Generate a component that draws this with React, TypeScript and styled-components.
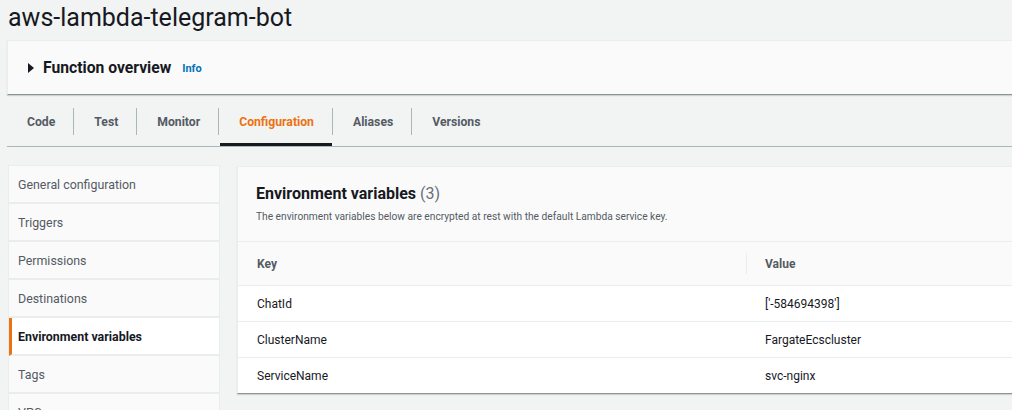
import React from 'react';
import styled, { createGlobalStyle } from 'styled-components';

const GlobalStyle = createGlobalStyle`
  html, body {
    margin: 0;
    padding: 0;
    background: #f2f3f3;
    overflow: hidden;
  }
  body {
    font-family: Roboto, "Liberation Sans", Arial, sans-serif;
    color: #16191f;
  }
`;

const Page = styled.div`
  width: 1040px;
  padding-left: 7px;
`;

const Title = styled.h1`
  margin: 0;
  height: 40px;
  padding-left: 1px;
  font-size: 25px;
  font-weight: 400;
  line-height: 35px;
  color: #16191f;
`;

const OverviewPanel = styled.div`
  display: flex;
  align-items: center;
  height: 53px;
  padding-left: 20px;
  background: #fafafa;
  border-top: 1px solid #eaeded;
  border-left: 1px solid #eaeded;
  border-bottom: 1px solid #879596;
  box-shadow: 0 1px 1px 0 rgba(0, 28, 36, 0.15);
`;

const Caret = styled.span`
  width: 0;
  height: 0;
  border-top: 5px solid transparent;
  border-bottom: 5px solid transparent;
  border-left: 6px solid #16191f;
  margin-right: 9px;
`;

const OverviewTitle = styled.span`
  font-size: 15.7px;
  font-weight: 700;
`;

const InfoLink = styled.a`
  margin-left: 11px;
  font-size: 11px;
  font-weight: 700;
  color: #0073bb;
  text-decoration: none;
  position: relative;
  top: 1px;
`;

const TabBar = styled.div`
  display: flex;
  margin-top: 13px;
  height: 38px;
  border-bottom: 1px solid #aab7b8;
`;

const Tab = styled.div<{ $active?: boolean; $first?: boolean }>`
  position: relative;
  display: flex;
  align-items: flex-start;
  padding: 6px 18px 0 20px;
  font-size: 12.2px;
  font-weight: 700;
  line-height: 16px;
  color: ${p => (p.$active ? '#ec7211' : '#545b64')};
  border-left: ${p => (p.$first ? 'none' : '1px solid #aab7b8')};
  height: 21px;

  &::after {
    content: '';
    display: ${p => (p.$active ? 'block' : 'none')};
    position: absolute;
    left: 1px;
    right: 0;
    bottom: -11px;
    height: 3px;
    background: #16191f;
  }
`;

const Body = styled.div`
  display: flex;
  align-items: flex-start;
  margin-top: 18px;
  padding-left: 1px;
`;

const Nav = styled.nav`
  display: flex;
  flex-direction: column;
  width: 210px;
  flex-shrink: 0;
  border-right: 1px solid #eaeded;
  border-left: 1px solid #eaeded;
  border-top: 1px solid #eaeded;
`;

const NavItem = styled.div<{ $active?: boolean }>`
  display: flex;
  align-items: center;
  height: 36px;
  padding-left: ${p => (p.$active ? '6px' : '9px')};
  border-bottom: 2px solid #eaeded;
  border-left: ${p => (p.$active ? '3px solid #ec7211' : 'none')};
  background: ${p => (p.$active ? '#ffffff' : '#fafafa')};
  font-size: 12.4px;
  font-weight: ${p => (p.$active ? 700 : 400)};
  color: ${p => (p.$active ? '#16191f' : '#545b64')};
`;

const Panel = styled.section`
  flex: 1;
  margin-left: 17px;
  margin-top: 1px;
  border-left: 1px solid #eaeded;
  border-top: 1px solid #eaeded;
  border-bottom: 1px solid #879596;
  box-shadow: 0 1px 1px 0 rgba(0, 28, 36, 0.15);
  background: #ffffff;
`;

const PanelHeader = styled.header`
  height: 75px;
  padding: 17px 0 0 18px;
  box-sizing: border-box;
  background: #fafafa;
  border-bottom: 1px solid #eaeded;
`;

const PanelTitle = styled.h2`
  margin: 0;
  font-size: 16px;
  font-weight: 700;
  line-height: 20px;
  color: #16191f;
`;

const Count = styled.span`
  font-weight: 400;
  color: #687078;
`;

const Description = styled.p`
  margin: 6px 0 0;
  font-size: 10.2px;
  line-height: 14px;
  color: #545b64;
`;

const Table = styled.div`
  display: grid;
  grid-template-columns: 508px 1fr;
`;

const HeadCell = styled.div<{ $divider?: boolean }>`
  position: relative;
  display: flex;
  align-items: center;
  height: 43px;
  padding-left: 19px;
  background: #fafafa;
  border-bottom: 1px solid #eaeded;
  font-size: 12px;
  font-weight: 700;
  color: #545b64;

  &::before {
    content: '';
    display: ${p => (p.$divider ? 'block' : 'none')};
    position: absolute;
    left: 0;
    top: 11px;
    bottom: 11px;
    width: 1px;
    background: #eaeded;
  }
`;

const Cell = styled.div<{ $last?: boolean }>`
  display: flex;
  align-items: center;
  height: 35px;
  padding-left: 19px;
  border-bottom: ${p => (p.$last ? 'none' : '1px solid #eaeded')};
  font-size: 12px;
  color: #16191f;
`;

const tabs = ['Code', 'Test', 'Monitor', 'Configuration', 'Aliases', 'Versions'];

const navItems = [
  'General configuration',
  'Triggers',
  'Permissions',
  'Destinations',
  'Environment variables',
  'Tags',
  'VPC',
];

const variables = [
  { key: 'ChatId', value: "['-584694398']" },
  { key: 'ClusterName', value: 'FargateEcscluster' },
  { key: 'ServiceName', value: 'svc-nginx' },
];

export default function App() {
  return (
    <>
      <GlobalStyle />
      <Page>
        <Title>aws-lambda-telegram-bot</Title>
        <OverviewPanel>
          <Caret />
          <OverviewTitle>Function overview</OverviewTitle>
          <InfoLink href="#">Info</InfoLink>
        </OverviewPanel>
        <TabBar>
          {tabs.map((t, i) => (
            <Tab key={t} $first={i === 0} $active={t === 'Configuration'}>
              {t}
            </Tab>
          ))}
        </TabBar>
        <Body>
          <Nav>
            {navItems.map(item => (
              <NavItem key={item} $active={item === 'Environment variables'}>
                {item}
              </NavItem>
            ))}
          </Nav>
          <Panel>
            <PanelHeader>
              <PanelTitle>
                Environment variables <Count>(3)</Count>
              </PanelTitle>
              <Description>
                The environment variables below are encrypted at rest with the default Lambda service key.
              </Description>
            </PanelHeader>
            <Table>
              <HeadCell>Key</HeadCell>
              <HeadCell $divider>Value</HeadCell>
              {variables.map((v, i) => (
                <React.Fragment key={v.key}>
                  <Cell $last={i === variables.length - 1}>{v.key}</Cell>
                  <Cell $last={i === variables.length - 1}>{v.value}</Cell>
                </React.Fragment>
              ))}
            </Table>
          </Panel>
        </Body>
      </Page>
    </>
  );
}
